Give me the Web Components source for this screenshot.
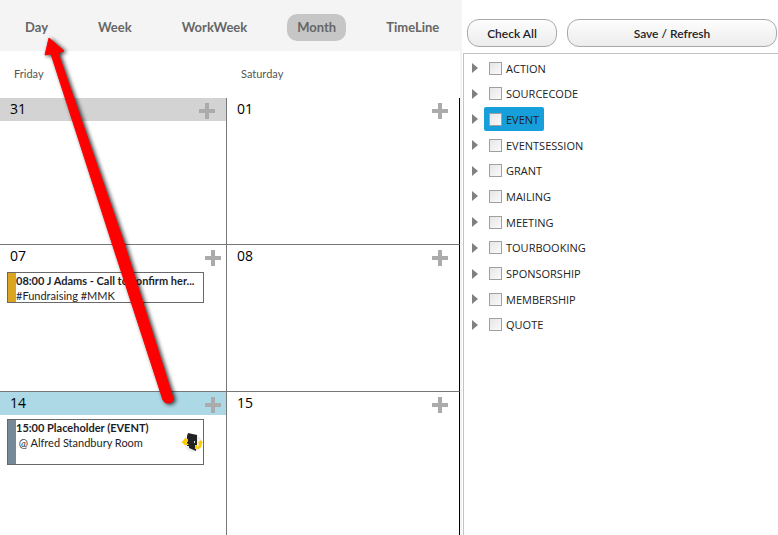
<!DOCTYPE html>
<html lang="en">
<head>
<meta charset="utf-8">
<title>Calendar</title>
<style>
    html, body { height: 100%; }
    body {
        margin: 0;
        font-family: Lato, "Open Sans", sans-serif;
        font-size: 11px;
        color: #222;
        background: #fff;
        overflow: hidden;
    }
</style>
</head>
<body>
<calendar-page>
    <view-tabs slot="calendar">
        <view-tab>Day</view-tab>
        <view-tab>Week</view-tab>
        <view-tab>WorkWeek</view-tab>
        <view-tab selected>Month</view-tab>
        <view-tab>TimeLine</view-tab>
    </view-tabs>
    <month-grid slot="calendar">
        <day-name>Friday</day-name>
        <day-name>Saturday</day-name>
        <day-cell day="31" kind="other"></day-cell>
        <day-cell day="01" last></day-cell>
        <day-cell day="07">
            <event-card color="goldenrod">
                08:00 J Adams - Call to confirm her...
                <span slot="detail">#Fundraising #MMK</span>
            </event-card>
        </day-cell>
        <day-cell day="08" last></day-cell>
        <day-cell day="14" kind="today">
            <event-card color="lightslategray" tall>
                15:00 Placeholder (EVENT)
                <span slot="detail">&nbsp;@ Alfred Standbury Room</span>
                <door-icon slot="icon"></door-icon>
            </event-card>
        </day-cell>
        <day-cell day="15" last></day-cell>
    </month-grid>
    <push-button slot="actions">Check All</push-button>
    <push-button slot="actions" wide>Save / Refresh</push-button>
    <tree-list slot="tree">
        <tree-item>ACTION</tree-item>
        <tree-item>SOURCECODE</tree-item>
        <tree-item selected>EVENT</tree-item>
        <tree-item>EVENTSESSION</tree-item>
        <tree-item>GRANT</tree-item>
        <tree-item>MAILING</tree-item>
        <tree-item>MEETING</tree-item>
        <tree-item>TOURBOOKING</tree-item>
        <tree-item>SPONSORSHIP</tree-item>
        <tree-item>MEMBERSHIP</tree-item>
        <tree-item>QUOTE</tree-item>
    </tree-list>
</calendar-page>
<pointer-arrow></pointer-arrow>

<script>
/* Base: every component only gives its markup and its styles */
class BaseElement extends HTMLElement {
    constructor() {
        super();
        this.attachShadow({ mode: "open" });
    }
    getTemplate() {
        const template = document.createElement("template");
        template.innerHTML = `<style>${this.getStyles()}</style>${this.getMarkup()}`;
        return template;
    }
    getMarkup() {
        return `<slot></slot>`;
    }
    render() {
        this.shadowRoot.replaceChildren(this.getTemplate().content.cloneNode(true));
    }
    connectedCallback() {
        this.render();
    }
}

// Whole page: calendar on the left, filters on the right
class CalendarPage extends BaseElement {
    getMarkup() {
        return `
        <main><slot name="calendar"></slot></main>
        <aside>
            <div class="actions"><slot name="actions"></slot></div>
            <div class="tree"><slot name="tree"></slot></div>
        </aside>`;
    }
    getStyles() {
        return `
            :host { display: grid; grid-template-columns: 462fr 316fr; min-height: 100%; }
            main { display: flex; flex-direction: column; background: #f4f4f4; min-width: 0; }
            aside { display: flex; flex-direction: column; min-width: 0; }
            .actions { display: flex; gap: 10px; padding: 19px 1px 6px 5px; }
            .tree {
                flex: 1;
                margin-left: 1px;
                padding: 2px 0 0 8px;
                border-left: 1px solid #c3c3c3;
                border-top: 1px solid #c3c3c3;
            }
        `;
    }
}
customElements.define("calendar-page", CalendarPage);

class ViewTabs extends BaseElement {
    getMarkup() {
        return `<nav><slot></slot></nav>`;
    }
    getStyles() {
        return `
            :host { display: block; }
            nav { display: flex; gap: 30px; padding: 14px 0 10px 15px; }
        `;
    }
}
customElements.define("view-tabs", ViewTabs);

class ViewTab extends BaseElement {
    getMarkup() {
        return `<button type="button"><slot></slot></button>`;
    }
    getStyles() {
        return `
            :host { display: block; }
            button {
                height: 27px;
                padding: 0 10px;
                border: 0;
                border-radius: 10px;
                background: none;
                font: 700 13px/27px Lato, sans-serif;
                color: #666;
            }
            :host([selected]) button { background: #c6c6c6; }
        `;
    }
}
customElements.define("view-tab", ViewTab);

class MonthGrid extends BaseElement {
    getStyles() {
        return `
            :host {
                flex: 1;
                display: grid;
                grid-template-columns: 227fr 233fr;
                grid-template-rows: 47px 147px 147px 1fr;
                margin-right: 2px;
                background: #fff;
            }
        `;
    }
}
customElements.define("month-grid", MonthGrid);

class DayName extends BaseElement {
    getStyles() {
        return `
            :host { padding: 14px 14px 0; line-height: 18px; color: #555; }
        `;
    }
}
customElements.define("day-name", DayName);

// One day: number, plus button and its events
class DayCell extends BaseElement {
    getMarkup() {
        return `
        <header>
            <time>${this.getAttribute("day")}</time>
            <button type="button" aria-label="Add">
                <svg width="16" height="16" viewBox="0 0 16 16"><path d="M6 0h4v6h6v4h-6v6H6v-6H0V6h6z" fill="#ababab"/></svg>
            </button>
        </header>
        <slot></slot>`;
    }
    getStyles() {
        return `
            :host {
                display: block;
                min-width: 0;
                border-right: 1px solid #777;
                border-bottom: 1px solid #777;
            }
            :host([last]) { border-right-color: #000; }
            :host(:nth-last-of-type(-n+2)) { border-bottom: 0; }
            header {
                display: flex;
                justify-content: space-between;
                align-items: start;
                height: 23px;
                padding: 0 5px 0 10px;
            }
            :host([last]) header, :host([kind="other"]) header { padding-right: 11px; }
            :host([kind="other"]) header { background: #d3d3d3; }
            :host([kind="today"]) header { background: #add8e6; }
            time { font: 500 14px/22px "Open Sans", sans-serif; color: #000; }
            button { display: block; padding: 5px 0 0; border: 0; background: none; }
            svg { display: block; }
        `;
    }
}
customElements.define("day-cell", DayCell);

class EventCard extends BaseElement {
    getMarkup() {
        return `
        <article>
            <div class="text">
                <strong><slot></slot></strong>
                <slot name="detail"></slot>
            </div>
            <slot name="icon"></slot>
        </article>`;
    }
    getStyles() {
        return `
            :host { display: block; margin: 4px 22px 0 7px; }
            article {
                display: flex;
                align-items: center;
                height: 29px;
                border: 1px solid #696969;
                background: #fff;
            }
            article::before {
                content: "";
                align-self: stretch;
                flex: none;
                width: 8px;
                background: ${this.getAttribute("color")};
            }
            :host([tall]) article { height: 44px; }
            .text { flex: 1; min-width: 0; align-self: start; line-height: 15px; white-space: nowrap; color: #1e1e28; }
            strong { display: block; }
        `;
    }
}
customElements.define("event-card", EventCard);

// Door with two yellow turning arrows
class DoorIcon extends BaseElement {
    getMarkup() {
        return `
        <svg width="22" height="22" viewBox="0 0 22 22">
            <circle cx="12" cy="12" r="9" fill="#eee"/>
            <path d="M7 2l9 2v12h-1v4l-7-3V15H6V5z" fill="#222"/>
            <path d="M13 10h1v2h-1z" fill="#ddd"/>
            <path d="M0 12l5-6v2h2v3H5l3 3H3l-1-2z M14 14h2v2q2 0 2-3l-1-1 3-3 2 3h-1q0 5-4 6h-3z" fill="#fc0"/>
        </svg>`;
    }
    getStyles() {
        return `:host { display: block; flex: none; } svg { display: block; }`;
    }
}
customElements.define("door-icon", DoorIcon);

class PushButton extends BaseElement {
    getMarkup() {
        return `<button type="button"><slot></slot></button>`;
    }
    getStyles() {
        return `
            :host { display: block; flex: 0 0 90px; }
            :host([wide]) { flex: 1; }
            button {
                width: 100%;
                height: 28px;
                padding: 1px 0 0;
                border: 1px solid #a9a9a9;
                border-radius: 12px;
                background: linear-gradient(#fdfdfd, #ececec);
                font: 600 12px/25px Lato, sans-serif;
                color: #1e1e28;
            }
        `;
    }
}
customElements.define("push-button", PushButton);

class TreeList extends BaseElement {
    getStyles() {
        return `
            :host { display: flex; flex-direction: column; justify-content: space-between; height: 281px; }
        `;
    }
}
customElements.define("tree-list", TreeList);

class TreeItem extends BaseElement {
    getMarkup() {
        return `
        <svg width="6" height="12" viewBox="0 0 6 12"><path d="M0 1v10l6-5z" fill="#808080"/></svg>
        <label><input type="checkbox"><slot></slot></label>`;
    }
    getStyles() {
        return `
            :host { display: flex; align-items: center; gap: 6px; height: 24px; }
            label {
                display: flex;
                align-items: center;
                gap: 4px;
                height: 24px;
                padding: 0 5px;
                border-radius: 2px;
                font: 11px "Open Sans", sans-serif;
                color: #222;
            }
            :host([selected]) label { background: #169fdb; }
            input {
                appearance: none;
                width: 13px;
                height: 13px;
                margin: 0;
                border: 1px solid #a0a0a0;
                background: linear-gradient(135deg, #e6e6e6, #fafafa);
            }
        `;
    }
}
customElements.define("tree-item", TreeItem);

// Red arrow drawn over the calendar
class PointerArrow extends BaseElement {
    getMarkup() {
        return `
        <svg width="190" height="420" viewBox="0 0 190 420" aria-hidden="true">
            <path d="M49 38L64 51L58 53L124 243L173 398Q174 402 169 403Q165 404 163 400L112 243L51 54L45 55Z"
                fill="#f00" stroke="#f00" stroke-width="1" stroke-linejoin="round"/>
        </svg>`;
    }
    getStyles() {
        return `
            :host { position: absolute; top: 0; left: 0; pointer-events: none; }
            svg { display: block; filter: drop-shadow(2px 1px 2px rgba(0, 0, 0, .8)); }
        `;
    }
}
customElements.define("pointer-arrow", PointerArrow);
</script>
</body>
</html>
